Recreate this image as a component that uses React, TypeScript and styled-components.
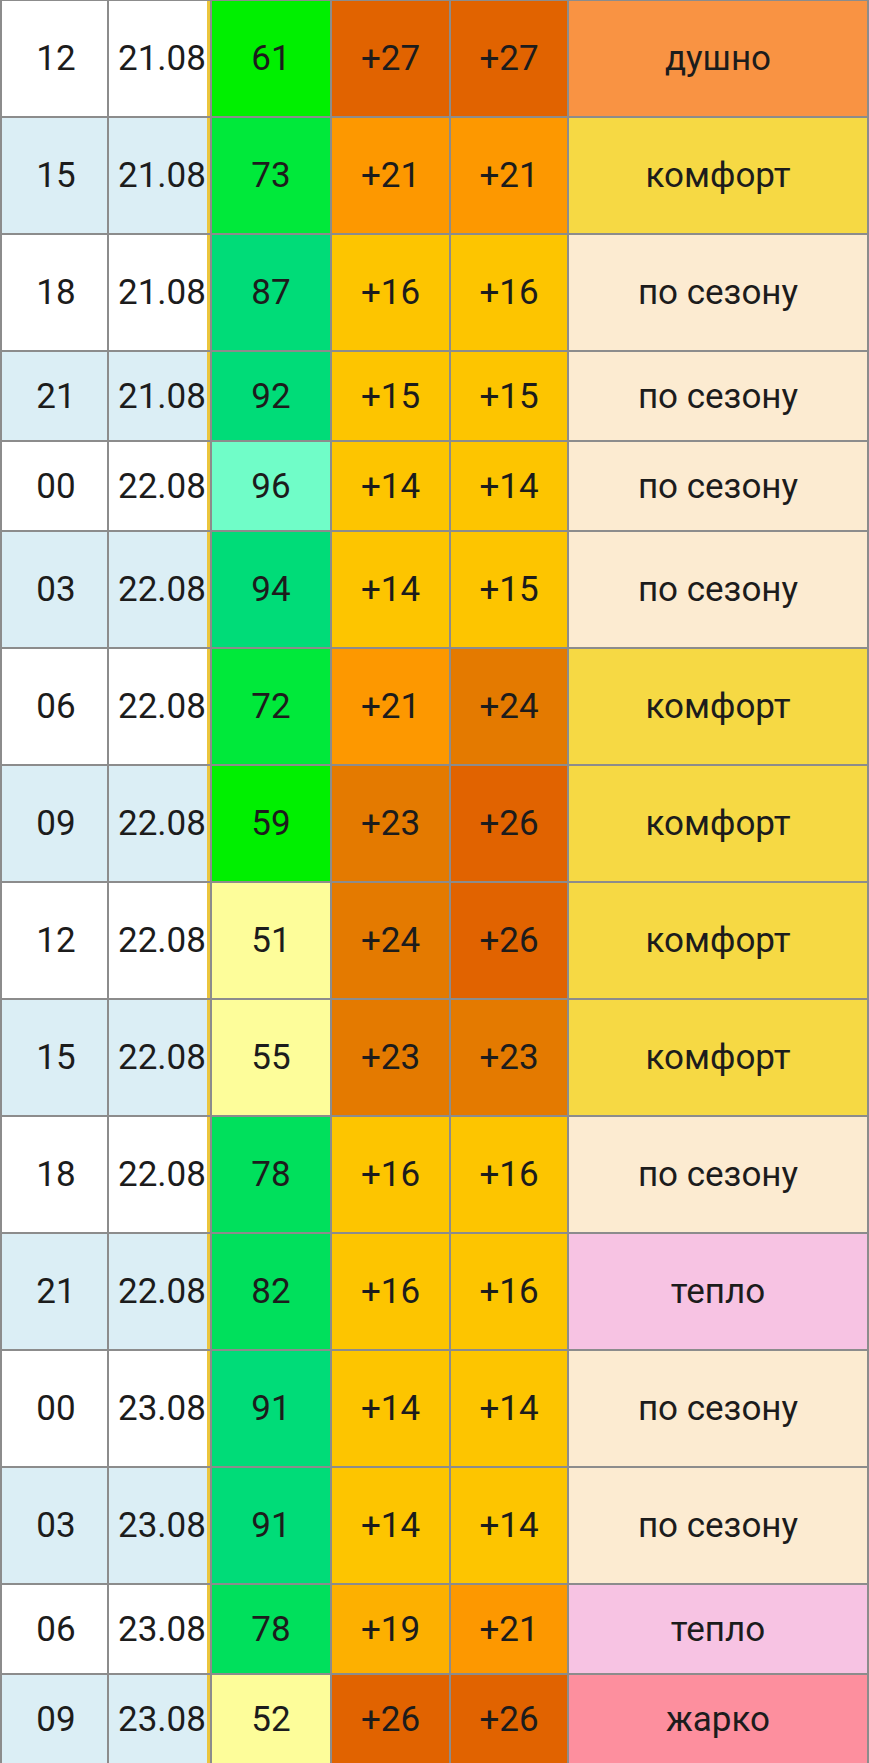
import React from "react";
import styled, { createGlobalStyle } from "styled-components";

const GlobalStyle = createGlobalStyle`
  html, body {
    margin: 0;
    padding: 0;
    background: #ffffff;
  }
  body {
    font-family: Roboto, "Noto Sans", "Liberation Sans", sans-serif;
  }
`;

const Table = styled.div`
  width: 869px;
  box-sizing: border-box;
  background: #8c8c8c;
  padding: 1px 2px 2px 2px;
  display: flex;
  flex-direction: column;
  gap: 2px;
`;

const Row = styled.div<{ $short?: boolean }>`
  display: grid;
  grid-template-columns: 105px 101px 118px 117px 116px 298px;
  column-gap: 2px;
  height: ${(p) => (p.$short ? "88px" : "115px")};
`;

const Cell = styled.div<{ $bg: string }>`
  background: ${(p) => p.$bg};
  display: flex;
  align-items: center;
  justify-content: center;
  font-family: Roboto, "Noto Sans", "Liberation Sans", sans-serif;
  font-size: 35px;
  color: #1c1c1c;
  white-space: nowrap;
  overflow: hidden;
  box-sizing: border-box;
`;

const HourCell = styled(Cell)`
  padding-left: 3px;
`;

const DateCell = styled(Cell)`
  border-right: 3px solid #ebc53c;
  padding-left: 8px;
  justify-content: center;
`;

type RowData = {
  h: string;
  d: string;
  hum: number;
  t1: number;
  t2: number;
  desc: string;
  short?: boolean;
};

const rows: RowData[] = [
  { h: "12", d: "21.08", hum: 61, t1: 27, t2: 27, desc: "душно" },
  { h: "15", d: "21.08", hum: 73, t1: 21, t2: 21, desc: "комфорт" },
  { h: "18", d: "21.08", hum: 87, t1: 16, t2: 16, desc: "по сезону" },
  { h: "21", d: "21.08", hum: 92, t1: 15, t2: 15, desc: "по сезону", short: true },
  { h: "00", d: "22.08", hum: 96, t1: 14, t2: 14, desc: "по сезону", short: true },
  { h: "03", d: "22.08", hum: 94, t1: 14, t2: 15, desc: "по сезону" },
  { h: "06", d: "22.08", hum: 72, t1: 21, t2: 24, desc: "комфорт" },
  { h: "09", d: "22.08", hum: 59, t1: 23, t2: 26, desc: "комфорт" },
  { h: "12", d: "22.08", hum: 51, t1: 24, t2: 26, desc: "комфорт" },
  { h: "15", d: "22.08", hum: 55, t1: 23, t2: 23, desc: "комфорт" },
  { h: "18", d: "22.08", hum: 78, t1: 16, t2: 16, desc: "по сезону" },
  { h: "21", d: "22.08", hum: 82, t1: 16, t2: 16, desc: "тепло" },
  { h: "00", d: "23.08", hum: 91, t1: 14, t2: 14, desc: "по сезону" },
  { h: "03", d: "23.08", hum: 91, t1: 14, t2: 14, desc: "по сезону" },
  { h: "06", d: "23.08", hum: 78, t1: 19, t2: 21, desc: "тепло", short: true },
  { h: "09", d: "23.08", hum: 52, t1: 26, t2: 26, desc: "жарко", short: true },
];

const humColor = (v: number): string => {
  if (v >= 95) return "#70fdc8";
  if (v >= 85) return "#00dc78";
  if (v >= 75) return "#00e05c";
  if (v >= 70) return "#00e93a";
  if (v >= 57) return "#00f000";
  return "#fdfd9a";
};

const tempColor = (v: number): string => {
  if (v >= 25) return "#e16300";
  if (v >= 22) return "#e47a00";
  if (v >= 20) return "#fd9800";
  if (v >= 18) return "#fdb000";
  return "#fdc500";
};

const descColor: Record<string, string> = {
  "душно": "#f99343",
  "комфорт": "#f6d944",
  "по сезону": "#fcebd1",
  "тепло": "#f7c3e3",
  "жарко": "#fd8f9e",
};

export default function App() {
  return (
    <>
      <GlobalStyle />
      <Table>
        {rows.map((r, i) => {
          const base = i % 2 === 0 ? "#ffffff" : "#dbeef5";
          return (
            <Row key={i} $short={r.short}>
              <HourCell $bg={base}>{r.h}</HourCell>
              <DateCell $bg={base}>{r.d}</DateCell>
              <Cell $bg={humColor(r.hum)}>{r.hum}</Cell>
              <Cell $bg={tempColor(r.t1)}>+{r.t1}</Cell>
              <Cell $bg={tempColor(r.t2)}>+{r.t2}</Cell>
              <Cell $bg={descColor[r.desc]}>{r.desc}</Cell>
            </Row>
          );
        })}
      </Table>
    </>
  );
}
